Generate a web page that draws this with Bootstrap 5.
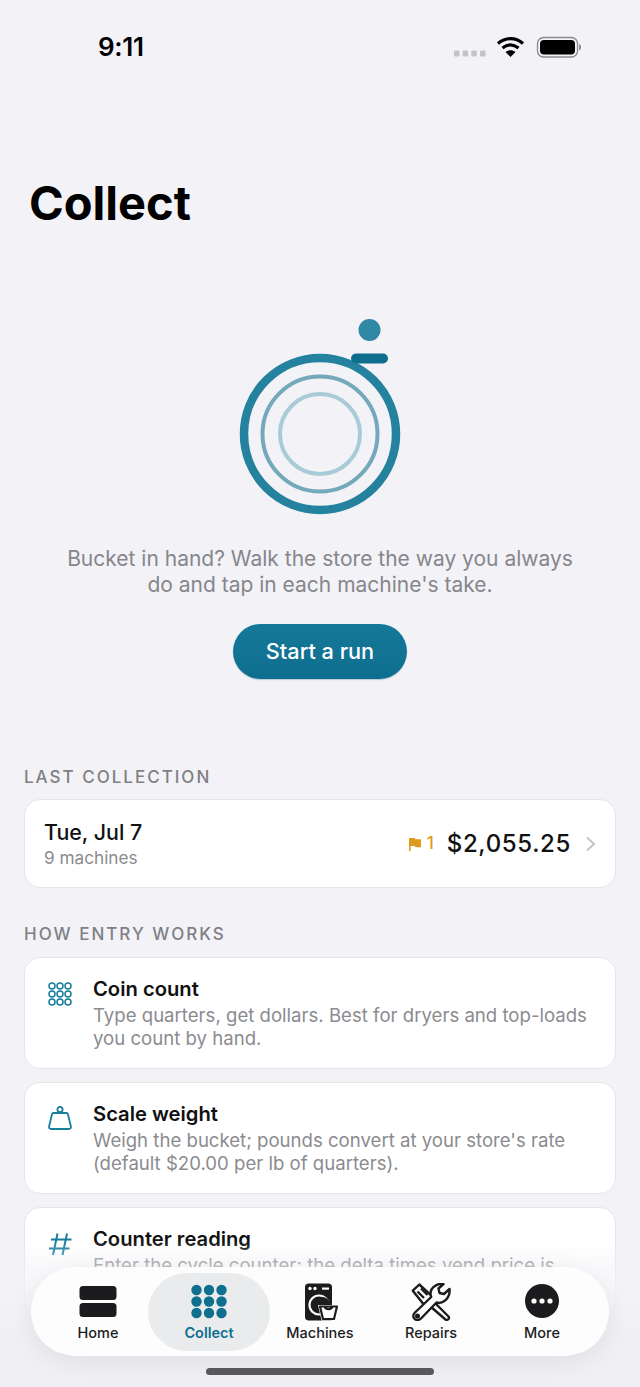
<!DOCTYPE html>
<html lang="en">
<head>
<meta charset="utf-8">
<title>Collect</title>
<link href="https://cdn.jsdelivr.net/npm/bootstrap@5.3.0/dist/css/bootstrap.min.css" rel="stylesheet">
<style>
html,body{height:1387px;overflow:hidden}
body{font-family:Inter,"Liberation Sans",sans-serif;background:#f2f2f7;color:#000;position:relative}
.status-row{height:94px;padding:0 59px 0 98px;padding-top:31px}
.clock{font-size:26px;font-weight:600;line-height:32px;letter-spacing:-.3px;color:#000}
.page-title{font-size:47px;font-weight:700;line-height:56px;margin:0;padding:81px 0 0 29px}
.hero{margin-top:83px}
.hero svg{display:block}
.hero-copy{width:520px;font-size:21px;line-height:26px;color:#86868b;margin:26px 0 0;text-align:center}
.run-btn{margin-top:26px;width:174px;height:55px;border-radius:28px;background:linear-gradient(#15789a,#0f6e8e);color:#fff;font-size:21.7px;font-weight:500;border:0;padding:0;box-shadow:0 1px 1px rgba(10,80,110,.25)}
.run-btn:hover{background:#15789a;color:#fff}
.sec-label{font-size:17px;font-weight:500;letter-spacing:2px;color:#7f7f85;line-height:22px;margin:0 0 11px 24px}
.sec-second{margin-top:35px;margin-bottom:12px}
.sec-first{margin-top:87px}
.panel{margin:0 24px;background:#fff;border:1px solid #e6e6ea;border-radius:16px}
.last-panel{height:89px;padding:0 19px 0 19px}
.last-date{font-size:21.4px;font-weight:500;line-height:28px;color:#111}
.last-sub{font-size:17.2px;line-height:24px;color:#8b8b90}
.flag-mark{margin-right:5px}
.flag-count{color:#df9a1d;font-size:17px;font-weight:500}
.amount{font-size:24px;font-weight:500;letter-spacing:.65px;color:#111;margin:0 14px 0 13px}
.info{height:112px;padding:18px 20px 0 23px;margin-bottom:13px}
.info-icon{width:24px;flex:none;margin-right:21px}
.info h3{font-size:20.2px;font-weight:600;line-height:26px;margin:0;color:#111}
.info p{font-size:18.6px;line-height:23px;color:#8b8b90;margin:2px 0 0}
.fade-veil{position:absolute;left:0;right:0;top:1240px;height:147px;background:linear-gradient(rgba(242,242,247,0),rgba(242,242,247,.45) 18%,rgba(242,242,247,.8) 40%,#f0f0f4 70%)}
.tabbar{position:absolute;left:31px;top:1267px;width:578px;height:89px;border-radius:45px;background:rgba(253,253,254,.97);box-shadow:0 6px 24px rgba(0,0,0,.07);padding:6px 0 6px 11.5px}
.tab-slot{width:111px;height:78px;padding-top:10px;color:#1c1c1e;font-size:14.5px;font-weight:500;line-height:18px}
.tab-slot svg{display:block;height:38px;margin-bottom:3px}
.tab-on{width:122px;margin:0 -5.5px;background:#eaebed;border-radius:39px;color:#0e6f8f;font-weight:600}
.home-bar{position:absolute;left:206px;top:1368px;width:228px;height:7px;border-radius:4px;background:#59595c}
</style>
</head>
<body>
<div class="status-row d-flex justify-content-between">
  <div class="clock">9:11</div>
  <svg width="130" height="30" viewBox="0 0 130 30" aria-hidden="true">
    <g fill="#c4c4c8"><rect x="3" y="19.500" width="5.500" height="6" rx="1.300"/><rect x="11.700" y="19.500" width="5.500" height="6" rx="1.300"/><rect x="20.300" y="19.500" width="5.500" height="6" rx="1.300"/><rect x="29" y="19.500" width="5.500" height="6" rx="1.300"/></g>
    <g fill="none" stroke="#000" stroke-width="3.200"><path d="M47 12.500c7.500-6.500 17.500-6.500 25 0"/><path d="M51.500 17c5-4 11-4 16 0"/></g>
    <path d="M59.500 26l-5-5c3-2.300 7-2.300 10 0z" fill="#000"/>
    <rect x="86.500" y="6.500" width="40" height="19.500" rx="6" fill="none" stroke="#8a8a8d" stroke-width="1.300"/>
    <rect x="89" y="9" width="35" height="14.500" rx="4" fill="#000"/>
    <path d="M128 13c1.500.4 2 1.800 2 3.300s-.5 2.900-2 3.300z" fill="#8a8a8d"/>
  </svg>
</div>
<h1 class="page-title">Collect</h1>
<div class="hero d-flex flex-column align-items-center">
  <svg width="200" height="206" viewBox="0 0 200 206" aria-hidden="true" fill="none">
    <circle cx="100" cy="120" r="76" stroke="#24829f" stroke-width="8.500"/>
    <circle cx="100" cy="120" r="57.500" stroke="#73a9bb" stroke-width="4"/>
    <circle cx="100" cy="120" r="40" stroke="#a9cbd7" stroke-width="4"/>
    <circle cx="149.500" cy="16" r="11" fill="#2f88a6"/>
    <rect x="131" y="39.500" width="37" height="10" rx="5" fill="#0f6e8e"/>
  </svg>
  <p class="hero-copy">Bucket in hand? Walk the store the way you always do and tap in each machine's take.</p>
  <button type="button" class="btn run-btn">Start a run</button>
</div>
<div class="sec-label sec-first">LAST COLLECTION</div>
<div class="panel last-panel d-flex align-items-center">
  <div class="flex-grow-1">
    <div class="last-date">Tue, Jul 7</div>
    <div class="last-sub">9 machines</div>
  </div>
  <svg width="14" height="14" viewBox="0 0 14 14" class="flag-mark" aria-hidden="true"><path d="M1 1h5.500l1 1.200H13v8H7.500l-1-1.200H2.600V14H1z" fill="#df9a1d"/></svg>
  <span class="flag-count">1</span>
  <span class="amount">$2,055.25</span>
  <svg width="11" height="16" viewBox="0 0 11 16" aria-hidden="true"><path d="M2 1.500l7 6.500-7 6.500" fill="none" stroke="#c4c4c7" stroke-width="2"/></svg>
</div>
<div class="sec-label sec-second">HOW ENTRY WORKS</div>
<div class="panel info d-flex">
  <div class="info-icon pt-1">
    <svg width="24" height="24" viewBox="0 0 24 24" fill="none" stroke="#177d9d" stroke-width="1.500" aria-hidden="true">
      <circle cx="4" cy="4" r="3"/><circle cx="12" cy="4" r="3"/><circle cx="20" cy="4" r="3"/>
      <circle cx="4" cy="12" r="3"/><circle cx="12" cy="12" r="3"/><circle cx="20" cy="12" r="3"/>
      <circle cx="4" cy="20" r="3"/><circle cx="12" cy="20" r="3"/><circle cx="20" cy="20" r="3"/>
    </svg>
  </div>
  <div><h3>Coin count</h3><p>Type quarters, get dollars. Best for dryers and top-loads you count by hand.</p></div>
</div>
<div class="panel info d-flex">
  <div class="info-icon pt-1">
    <svg width="24" height="26" viewBox="0 0 24 26" fill="none" stroke="#177d9d" stroke-width="1.800" aria-hidden="true">
      <circle cx="12" cy="3.500" r="2.600"/>
      <path d="M5.500 7h13c.7 0 1.200.4 1.400 1l3 12.500c.3 1.400-.5 2.500-1.900 2.500H3c-1.400 0-2.200-1.100-1.900-2.500L4 8c.2-.6.800-1 1.500-1z"/>
    </svg>
  </div>
  <div><h3>Scale weight</h3><p>Weigh the bucket; pounds convert at your store's rate (default $20.00 per lb of quarters).</p></div>
</div>
<div class="panel info d-flex">
  <div class="info-icon pt-1">
    <svg width="24" height="24" viewBox="0 0 24 24" fill="none" stroke="#177d9d" stroke-width="2" aria-hidden="true"><path d="M9.500 1.500L5 23M19 1.500L14.500 23M3 7.500h20.500M1 16.500h20.500"/></svg>
  </div>
  <div><h3>Counter reading</h3><p>Enter the cycle counter; the delta times vend price is your take for that machine.</p></div>
</div>
<div class="fade-veil"></div>
<nav class="tabbar d-flex align-items-start">
  <div class="tab-slot d-flex flex-column align-items-center">
    <svg width="38" height="38" viewBox="0 0 38 38" aria-hidden="true"><rect x="0.500" y="3" width="37" height="14" rx="3.500" fill="#1c1c1e"/><rect x="0.500" y="20" width="37" height="14" rx="3.500" fill="#1c1c1e"/></svg>Home
  </div>
  <div class="tab-slot tab-on d-flex flex-column align-items-center">
    <svg width="36" height="38" viewBox="0 0 36 38" fill="#0e6f8f" aria-hidden="true">
      <circle cx="5.500" cy="7" r="5.200"/><circle cx="18" cy="7" r="5.200"/><circle cx="30.500" cy="7" r="5.200"/>
      <circle cx="5.500" cy="18.500" r="5.200"/><circle cx="18" cy="18.500" r="5.200"/><circle cx="30.500" cy="18.500" r="5.200"/>
      <circle cx="5.500" cy="30" r="5.200"/><circle cx="18" cy="30" r="5.200"/><circle cx="30.500" cy="30" r="5.200"/>
    </svg>Collect
  </div>
  <div class="tab-slot d-flex flex-column align-items-center">
    <svg width="36" height="38" viewBox="0 0 36 38" aria-hidden="true">
      <path d="M6.500 0.500h20c2 0 3.500 1.500 3.500 3.500v32c0 .9-.6 1.500-1.500 1.500h-22c-2 0-3.500-1.500-3.500-3.500V4c0-2 1.500-3.500 3.500-3.500z" fill="#1c1c1e"/>
      <circle cx="8" cy="5.500" r="1.700" fill="#fff"/><circle cx="13" cy="5.500" r="1.700" fill="#fff"/><rect x="20" y="4.500" width="7" height="2.200" fill="#fff"/>
      <circle cx="17" cy="22" r="9.500" fill="none" stroke="#fff" stroke-width="2.200"/>
      <circle cx="20" cy="22" r="8" fill="#1c1c1e"/>
      <path d="M16 22h21l-3.500 15.500h-14z" fill="#fdfdfe"/>
      <path d="M18 23.500h17l-3 12.500H21zM22.500 23.500c1 3.500 7 3.500 8 0" fill="none" stroke="#1c1c1e" stroke-width="2.200" stroke-linejoin="round"/>
    </svg>Machines
  </div>
  <div class="tab-slot d-flex flex-column align-items-center">
    <svg width="40" height="38" viewBox="0 0 40 38" fill="none" stroke="#1c1c1e" stroke-width="2.400" stroke-linejoin="round" aria-hidden="true">
      <path d="M1.800 7.700L8.300 1.500 22.300 14.300 14 23z"/>
      <path d="M6.500 8.500l6.500 6.500M10 5.500l6.500 6.500"/>
      <path d="M23.500 19.500L37.500 33.500Q38.500 35 37.500 36 36 37.500 34.500 36.500L19.500 23.500" fill="#fdfdfe"/>
      <path d="M38.500 6L33 11l-4.500-1-1-4.500 5-4.500C27 0 19.500 4 19.500 10.500c0 1.500.3 2.500.7 3.500L4 29.500C2.800 30.700 2.300 32 2.300 33c0 2.500 2 4 4.200 4 1.300 0 2.500-.5 3.500-1.500L25.500 19.500C32 21.500 39.500 15 38.500 6z" fill="#fdfdfe"/>
      <circle cx="6.500" cy="33" r="1.300"/>
    </svg>Repairs
  </div>
  <div class="tab-slot d-flex flex-column align-items-center">
    <svg width="36" height="38" viewBox="0 0 36 38" aria-hidden="true"><circle cx="18" cy="18" r="17" fill="#1c1c1e"/><circle cx="10" cy="18" r="2.600" fill="#fff"/><circle cx="18" cy="18" r="2.600" fill="#fff"/><circle cx="26" cy="18" r="2.600" fill="#fff"/></svg>More
  </div>
</nav>
<div class="home-bar"></div>
<script src="https://cdn.jsdelivr.net/npm/bootstrap@5.3.0/dist/js/bootstrap.bundle.min.js"></script>
</body>
</html>
